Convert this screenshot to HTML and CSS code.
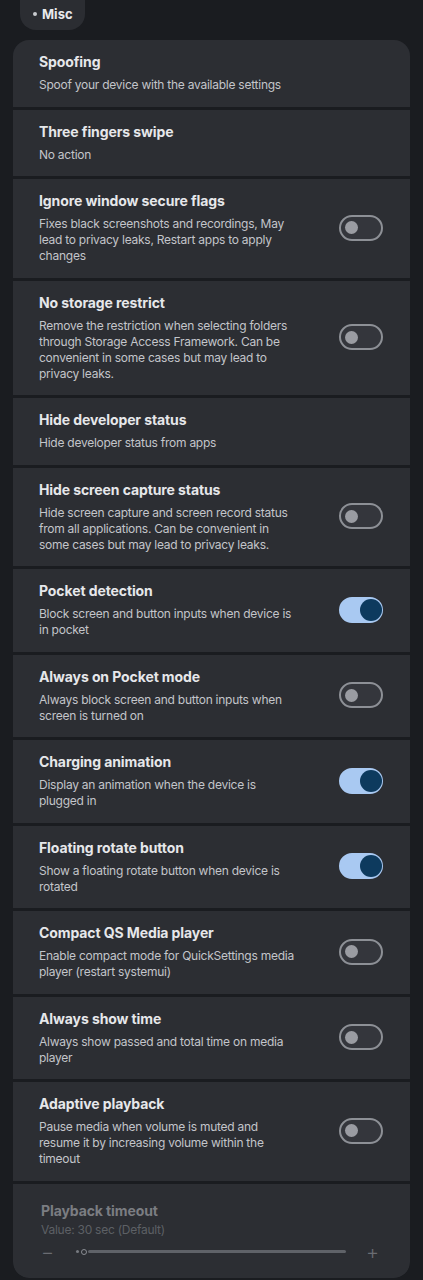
FILE: index.html
```html
<!DOCTYPE html>
<html>
<head>
<meta charset="utf-8">
<link rel="stylesheet" href="styles.css">
</head>
<body>
<div class="page">
  <div class="chip"><span class="dot"></span>Misc</div>
  <div class="card">
    <div class="item">
      <div class="text"><div class="title">Spoofing</div><div class="desc">Spoof your device with the available settings</div></div>
    </div>
    <div class="item">
      <div class="text"><div class="title">Three fingers swipe</div><div class="desc">No action</div></div>
    </div>
    <div class="item">
      <div class="text"><div class="title">Ignore window secure flags</div><div class="desc">Fixes black screenshots and recordings, May lead to privacy leaks, Restart apps to apply changes</div></div>
      <div class="toggle"></div>
    </div>
    <div class="item">
      <div class="text"><div class="title">No storage restrict</div><div class="desc">Remove the restriction when selecting folders through Storage Access Framework. Can be convenient in some cases but may lead to privacy leaks.</div></div>
      <div class="toggle"></div>
    </div>
    <div class="item">
      <div class="text"><div class="title">Hide developer status</div><div class="desc">Hide developer status from apps</div></div>
    </div>
    <div class="item">
      <div class="text"><div class="title">Hide screen capture status</div><div class="desc">Hide screen capture and screen record status from all applications. Can be convenient in some cases but may lead to privacy leaks.</div></div>
      <div class="toggle"></div>
    </div>
    <div class="item">
      <div class="text"><div class="title">Pocket detection</div><div class="desc">Block screen and button inputs when device is in pocket</div></div>
      <div class="toggle on"></div>
    </div>
    <div class="item">
      <div class="text"><div class="title">Always on Pocket mode</div><div class="desc">Always block screen and button inputs when screen is turned on</div></div>
      <div class="toggle"></div>
    </div>
    <div class="item">
      <div class="text"><div class="title">Charging animation</div><div class="desc">Display an animation when the device is plugged in</div></div>
      <div class="toggle on"></div>
    </div>
    <div class="item">
      <div class="text"><div class="title">Floating rotate button</div><div class="desc">Show a floating rotate button when device is rotated</div></div>
      <div class="toggle on"></div>
    </div>
    <div class="item">
      <div class="text"><div class="title">Compact QS Media player</div><div class="desc">Enable compact mode for QuickSettings media player (restart systemui)</div></div>
      <div class="toggle"></div>
    </div>
    <div class="item">
      <div class="text"><div class="title">Always show time</div><div class="desc">Always show passed and total time on media player</div></div>
      <div class="toggle"></div>
    </div>
    <div class="item">
      <div class="text"><div class="title">Adaptive playback</div><div class="desc">Pause media when volume is muted and resume it by increasing volume within the timeout</div></div>
      <div class="toggle"></div>
    </div>
    <div class="item slider-item">
      <div class="title dim">Playback timeout</div>
      <div class="desc dim">Value: 30 sec (Default)</div>
      <div class="slider">
        <span class="sym">−</span>
        <div class="track"><span class="start"></span><span class="thumb"></span><span class="line"></span></div>
        <span class="sym">+</span>
      </div>
    </div>
  </div>
</div>
</body>
</html>
```

FILE: styles.css
```css
html, body {
  margin: 0;
  padding: 0;
  background: #1a1c20;
}
body {
  font-family: Inter, "Noto Sans", sans-serif;
  color: #e4e5e8;
}
.page {
  width: 423px;
  height: 1280px;
  overflow: hidden;
  padding: 0 13px;
  box-sizing: border-box;
}
.chip {
  display: inline-flex;
  align-items: center;
  gap: 5px;
  margin-left: 7px;
  margin-top: -4px;
  height: 33px;
  padding: 1px 12px 0 13px;
  box-sizing: border-box;
  background: #2b2d32;
  border-radius: 0 0 16px 16px;
  font-size: 13px;
  font-weight: 700;
  color: #e8e9ec;
}
.chip .dot {
  width: 4px;
  height: 4px;
  border-radius: 50%;
  background: #c9cbd0;
}
.card {
  margin-top: 10px;
  width: 397px;
  display: flex;
  flex-direction: column;
  gap: 3px;
  border-radius: 16px;
  overflow: hidden;
}
.item {
  background: #2c2e33;
  display: flex;
  align-items: center;
  gap: 38px;
  padding: 12px 27px 13.5px 26px;
}
.text {
  flex: 1;
  min-width: 0;
}
.title {
  font-size: 14px;
  font-weight: 700;
  line-height: 20px;
  letter-spacing: -0.1px;
  color: #e6e7ea;
  margin-bottom: 5px;
}
.desc {
  font-size: 12px;
  line-height: 16px;
  letter-spacing: -0.25px;
  color: #c3c5ca;
}
.toggle {
  flex: none;
  width: 44px;
  height: 26px;
  box-sizing: border-box;
  border: 2px solid #8d9096;
  border-radius: 14px;
  background: #34363c;
  position: relative;
}
.toggle::after {
  content: "";
  position: absolute;
  left: 4px;
  top: 4.5px;
  width: 13px;
  height: 13px;
  border-radius: 50%;
  background: #9a9ca2;
}
.toggle.on {
  border-color: #a9c9f2;
  background: #a9c9f2;
}
.toggle.on::after {
  left: 19px;
  top: 0;
  width: 22px;
  height: 22px;
  background: #0d3a5e;
}
.slider-item {
  display: block;
  padding: 17px 32px 14px 28px;
  border-radius: 0 0 16px 16px;
}
.title.dim {
  color: #7b7d82;
  margin-bottom: 1px;
}
.desc.dim {
  color: #5d6065;
}
.slider {
  display: flex;
  align-items: center;
  margin-top: 2px;
  height: 24px;
}
.sym {
  width: 12px;
  font-size: 20px;
  font-weight: 300;
  color: #6a6c72;
  text-align: center;
  line-height: 24px;
}
.track {
  flex: 1;
  display: flex;
  align-items: center;
  margin: 0 20px 0 23px;
}
.track .start {
  width: 3px;
  height: 3px;
  border-radius: 50%;
  background: #777a80;
  margin-right: 2px;
}
.track .thumb {
  width: 6px;
  height: 6px;
  box-sizing: border-box;
  border: 1.5px solid #8a8d93;
  border-radius: 50%;
}
.track .line {
  flex: 1;
  height: 3px;
  border-radius: 2px;
  background: #5f6268;
  margin-left: 1px;
}
```
